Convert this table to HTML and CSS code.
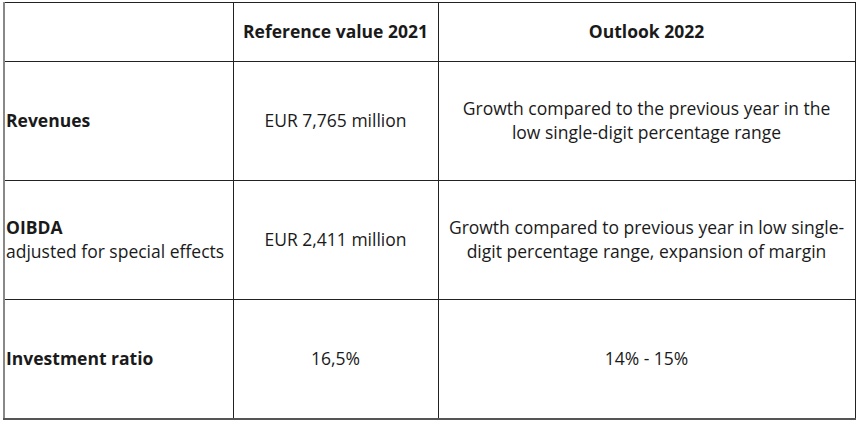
FILE: index.html
```html
<!DOCTYPE html>
<html>
<head>
<meta charset="utf-8">
<link rel="stylesheet" href="styles.css">
</head>
<body>
<table class="outlook">
  <colgroup>
    <col class="c1"><col class="c2"><col class="c3">
  </colgroup>
  <tr class="head">
    <th></th>
    <th>Reference value 2021</th>
    <th>Outlook 2022</th>
  </tr>
  <tr>
    <td class="label"><strong>Revenues</strong></td>
    <td class="val">EUR 7,765 million</td>
    <td class="val">Growth compared to the previous year in the<br>low single-digit percentage range</td>
  </tr>
  <tr>
    <td class="label"><strong>OIBDA</strong><br>adjusted for special effects</td>
    <td class="val">EUR 2,411 million</td>
    <td class="val">Growth compared to previous year in low single-digit percentage range, expansion of margin</td>
  </tr>
  <tr>
    <td class="label"><strong>Investment ratio</strong></td>
    <td class="val">16,5%</td>
    <td class="val">14% - 15%</td>
  </tr>
</table>
</body>
</html>
```
FILE: styles.css
```css
html, body {
  margin: 0;
  padding: 0;
  background: #fff;
}
body {
  padding: 2px 0 0 3px;
  font-family: "Open Sans", "Noto Sans", sans-serif;
  font-size: 17.5px;
  color: #1a1a1a;
}
.outlook {
  border-collapse: collapse;
  table-layout: fixed;
  width: 851px;
  border-top: 1px solid #333;
  border-left: 2px solid #888;
  border-right: 1px solid #333;
  border-bottom: 2px solid #555;
}
.c1 { width: 229px; }
.c2 { width: 205px; }
.c3 { width: 417px; }
.outlook th,
.outlook td {
  border: 1px solid #222;
  padding: 0 1px 2px;
  vertical-align: middle;
  line-height: 24px;
}
.head th {
  height: 56px;
  text-align: center;
  font-weight: 700;
}
.outlook td {
  height: 116px;
}
.label {
  text-align: left;
}
.label strong {
  font-weight: 700;
}
.val {
  text-align: center;
}
```
